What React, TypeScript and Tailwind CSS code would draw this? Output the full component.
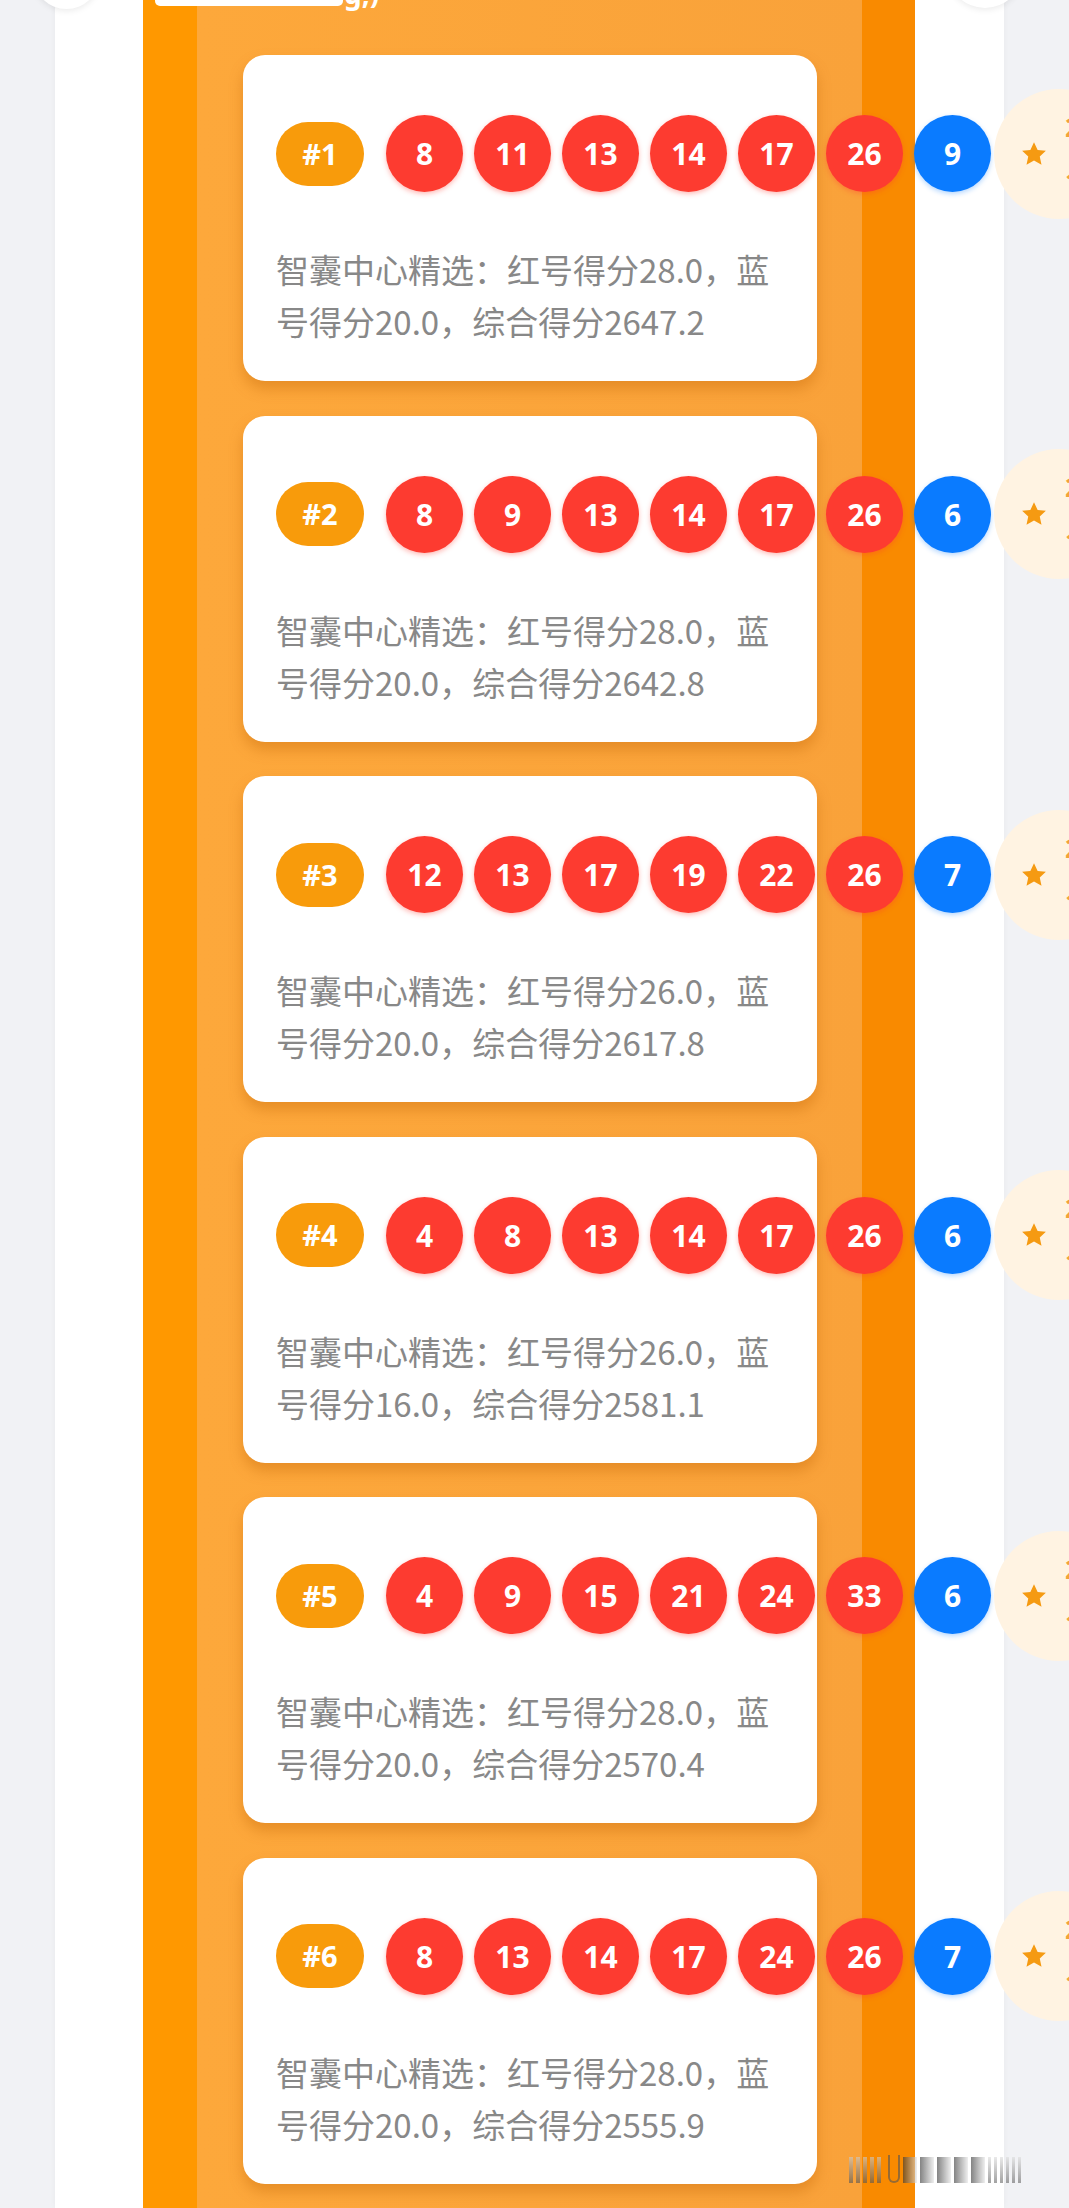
import React from 'react';

type Pick = {
  rank: number;
  reds: number[];
  blue: number;
  redScore: string;
  blueScore: string;
  total: string;
};

const PICKS: Pick[] = [
  { rank: 1, reds: [8, 11, 13, 14, 17, 26], blue: 9, redScore: '28.0', blueScore: '20.0', total: '2647.2' },
  { rank: 2, reds: [8, 9, 13, 14, 17, 26], blue: 6, redScore: '28.0', blueScore: '20.0', total: '2642.8' },
  { rank: 3, reds: [12, 13, 17, 19, 22, 26], blue: 7, redScore: '26.0', blueScore: '20.0', total: '2617.8' },
  { rank: 4, reds: [4, 8, 13, 14, 17, 26], blue: 6, redScore: '26.0', blueScore: '16.0', total: '2581.1' },
  { rank: 5, reds: [4, 9, 15, 21, 24, 33], blue: 6, redScore: '28.0', blueScore: '20.0', total: '2570.4' },
  { rank: 6, reds: [8, 13, 14, 17, 24, 26], blue: 7, redScore: '28.0', blueScore: '20.0', total: '2555.9' },
];

const numFont = "font-['Noto_Sans','Noto_Sans_CJK_SC',sans-serif]";
const cjkFont = "font-['Noto_Sans_CJK_SC','Noto_Sans',sans-serif]";

function Star() {
  return (
    <svg width="30" height="30" viewBox="0 0 24 24" className="shrink-0">
      <path
        d="M12 2.5l2.9 6.2 6.6.7-4.9 4.5 1.4 6.6L12 17.2l-6 3.3 1.4-6.6-4.9-4.5 6.6-.7z"
        fill="#f59a12"
      />
    </svg>
  );
}

function Ball({ n, blue }: { n: number; blue?: boolean }) {
  return (
    <div
      className={[
        'w-[77px] h-[77px] shrink-0 rounded-full text-white text-[30px] font-bold flex items-center justify-center',
        numFont,
        blue
          ? 'bg-[#0a7bff] shadow-[0_2px_5px_rgba(10,123,255,0.3)]'
          : 'bg-[#fd3b30] shadow-[0_2px_5px_rgba(255,59,48,0.35)]',
      ].join(' ')}
    >
      {n}
    </div>
  );
}

function PickCard({ pick }: { pick: Pick }) {
  return (
    <div className="w-[574px] h-[326px] shrink-0 rounded-[22px] bg-white px-[33px] pt-[60px] shadow-[0_8px_14px_rgba(190,95,0,0.35)]">
      <div className="flex items-center h-[77px] w-max">
        <div
          className={`w-[88px] h-[64px] shrink-0 rounded-full bg-[#f89b0b] text-white text-[29px] font-bold flex items-center justify-center ${numFont}`}
        >
          #{pick.rank}
        </div>
        <div className="flex items-center gap-[11px] ml-[22px] shrink-0">
          {pick.reds.map((n, i) => (
            <Ball key={i} n={n} />
          ))}
          <Ball n={pick.blue} blue />
        </div>
        <div className="ml-[3px] w-[130px] h-[130px] shrink-0 rounded-full bg-[#fff3e2] flex items-center pl-[25px]">
          <Star />
          <div className={`ml-[16px] flex flex-col gap-[24px] text-[26px] leading-[30px] font-bold text-[#f2a23a] ${numFont}`}>
            <span>2</span>
            <span>1</span>
          </div>
        </div>
      </div>
      <p className={`mt-[51px] text-[33px] leading-[52px] text-[#888888] whitespace-nowrap ${cjkFont}`}>
        智囊中心精选：红号得分{pick.redScore}，蓝
        <br />
        号得分{pick.blueScore}，综合得分{pick.total}
      </p>
    </div>
  );
}

export default function App() {
  return (
    <div className="relative w-[1069px] h-[2208px] overflow-hidden bg-[#f1f2f5]">
      <div className="ml-[55px] w-[949px] h-full bg-white pl-[88px] shadow-[0_0_6px_rgba(0,0,0,0.04)]">
        <div className="w-[772px] h-full pl-[100px] pt-[55px] flex flex-col gap-[34.5px] bg-[linear-gradient(90deg,#ff9800_0px,#ff9800_54px,#fda83b_54px,#f9a23a_719px,#f98a00_719px,#f98a00_772px)]">
          {PICKS.map((p) => (
            <PickCard key={p.rank} pick={p} />
          ))}
        </div>
      </div>

      {/* clipped bits at the top edge */}
      <div className="absolute left-[33px] top-[-58px] w-[67px] h-[67px] rounded-full bg-white shadow-[0_2px_6px_rgba(0,0,0,0.08)]" />
      <div className="absolute left-[947px] top-[-68px] w-[76px] h-[76px] rounded-full bg-white shadow-[0_2px_6px_rgba(0,0,0,0.08)]" />
      <div className="absolute left-[155px] top-[-10px] w-[188px] h-[16px] rounded-[5px] bg-white" />
      <div className={`absolute left-[344px] top-[-22px] text-[28px] leading-[30px] font-bold text-white ${numFont}`}>
        g,)
      </div>

      {/* watermark */}
      <div className="absolute left-[849px] top-[2153px] flex items-end gap-[3px] h-[30px] opacity-60">
        {[0, 1, 2, 3, 4].map((i) => (
          <div key={i} className="w-[4px] h-[26px] bg-[linear-gradient(180deg,#ccc,#555)]" />
        ))}
        <div className="w-[12px] h-[28px] rounded-b-full border-2 border-[#555] border-t-0 ml-[4px]" />
        {[0, 1, 2, 3, 4].map((i) => (
          <div key={'b' + i} className="w-[14px] h-[26px] bg-[linear-gradient(90deg,#333,#e5e5e5)]" />
        ))}
        {[0, 1, 2, 3, 4, 5].map((i) => (
          <div key={'c' + i} className="w-[3px] h-[26px] bg-[linear-gradient(180deg,#ddd,#666)]" />
        ))}
      </div>
    </div>
  );
}
